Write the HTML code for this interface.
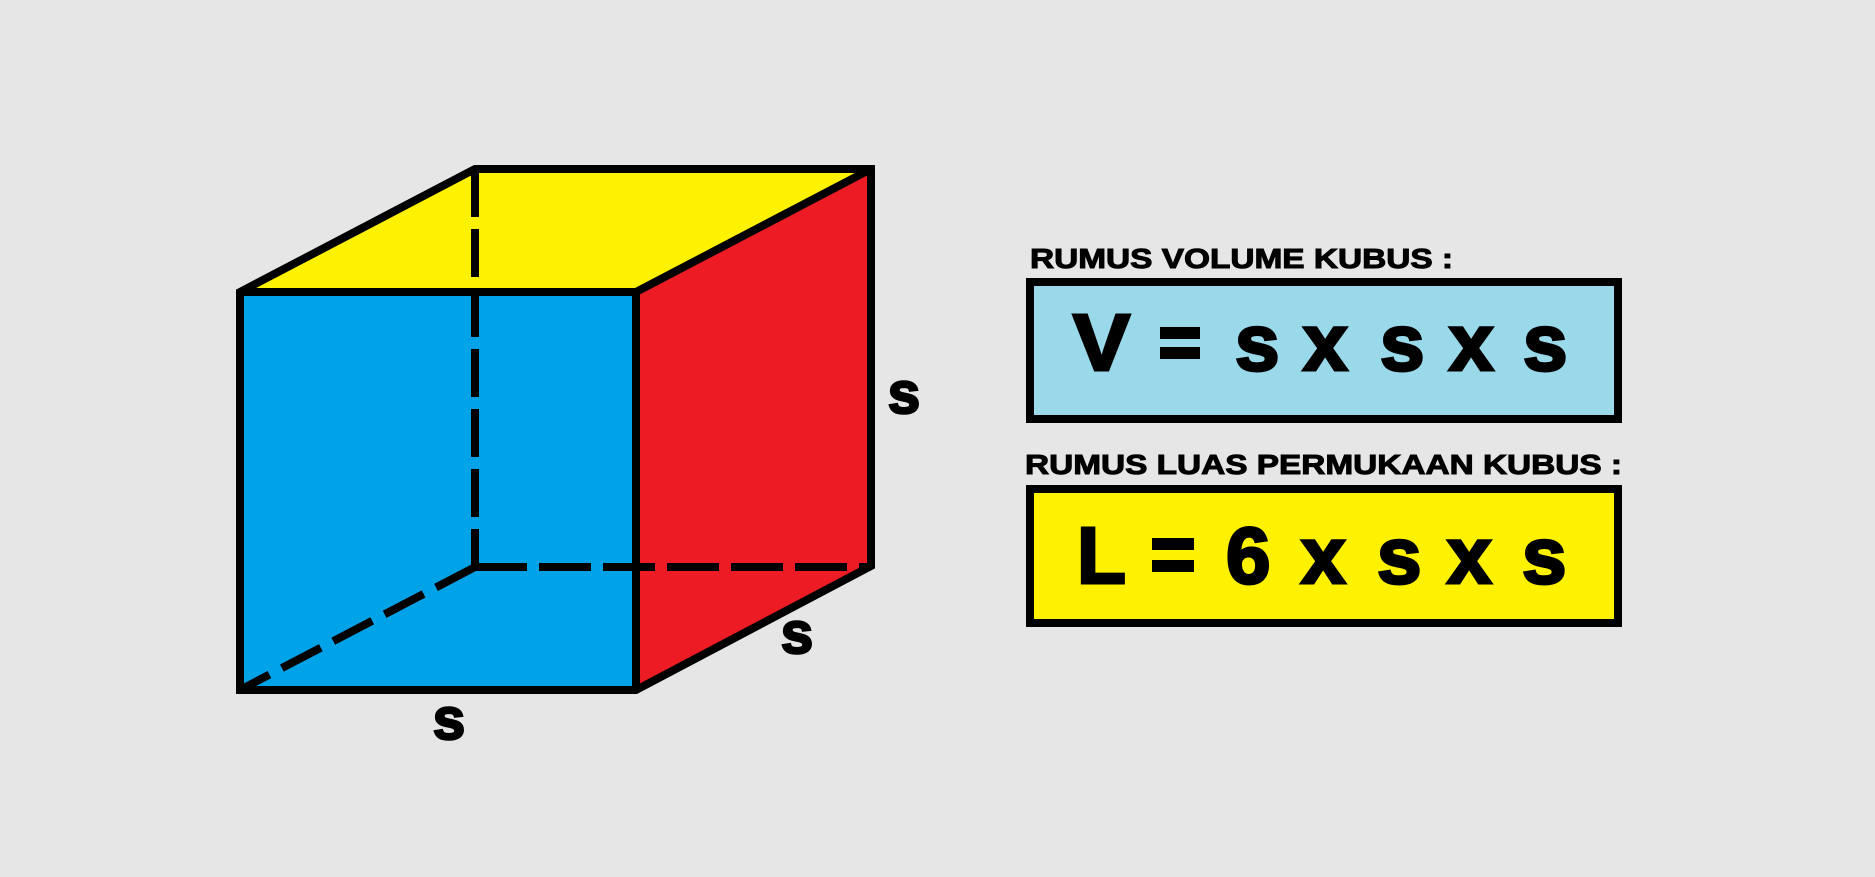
<!DOCTYPE html>
<html><head><meta charset="utf-8"><style>
html,body{margin:0;padding:0;background:#e6e6e6;}
svg{display:block;}
text{font-family:"Liberation Sans",Arial,sans-serif;font-weight:bold;fill:#000;}
</style></head><body>
<svg width="1875" height="877" viewBox="0 0 1875 877" xmlns="http://www.w3.org/2000/svg">
<rect width="1875" height="877" fill="#e6e6e6"/>
<polygon points="240,292 475,169 871,169 636,292" fill="#fff200"/>
<polygon points="636,292 871,169 871,566 636,690" fill="#ed1c24"/>
<rect x="240" y="292" width="396" height="398" fill="#00a2e8"/>
<g stroke="#000" stroke-width="8" fill="none">
<line x1="475" y1="169" x2="475" y2="567" stroke-dasharray="48 12"/>
<line x1="475" y1="567" x2="871" y2="567" stroke-dasharray="52 12"/>
<line x1="475" y1="567" x2="240" y2="690" stroke-dasharray="44 14"/>
</g>
<g stroke="#000" stroke-width="8" fill="none" stroke-linejoin="miter">
<polygon points="240,292 475,169 871,169 871,566 636,690 240,690"/>
<polyline points="240,292 636,292 871,169"/>
<line x1="636" y1="292" x2="636" y2="690"/>
</g>
<g font-size="58" stroke="#000" stroke-width="2.5" text-anchor="middle">
<text x="904" y="413">s</text>
<text x="797" y="653">s</text>
<text x="449" y="739">s</text>
</g>

<text x="1030" y="268" font-size="28" stroke="#000" stroke-width="1" textLength="423" lengthAdjust="spacingAndGlyphs">RUMUS VOLUME KUBUS :</text>
<rect x="1030" y="282" width="588" height="137" fill="#99d9ea" stroke="#000" stroke-width="8"/>
<g font-size="80" stroke="#000" stroke-width="3">
<text x="1073" y="370" textLength="57" lengthAdjust="spacingAndGlyphs">V</text>
<text x="1235" y="370">s</text>
<text x="1303" y="370">x</text>
<text x="1380" y="370">s</text>
<text x="1449" y="370">x</text>
<text x="1523" y="370">s</text>
</g>
<text x="1160" y="358" font-size="80" style="fill:none;stroke:none">=</text>
<rect x="1160" y="327" width="40" height="12" fill="#000"/>
<rect x="1160" y="347" width="40" height="12" fill="#000"/>

<text x="1025" y="474" font-size="28" stroke="#000" stroke-width="1" textLength="597" lengthAdjust="spacingAndGlyphs">RUMUS LUAS PERMUKAAN KUBUS :</text>
<rect x="1030" y="489" width="588" height="134" fill="#fff200" stroke="#000" stroke-width="8"/>
<g font-size="80" stroke="#000" stroke-width="3">
<text x="1077" y="583">L</text>
<text x="1226" y="583">6</text>
<text x="1301" y="583">x</text>
<text x="1377" y="583">s</text>
<text x="1447" y="583">x</text>
<text x="1522" y="583">s</text>
</g>
<text x="1152" y="572" font-size="80" style="fill:none;stroke:none">=</text>
<rect x="1152" y="538" width="42" height="12" fill="#000"/>
<rect x="1152" y="560" width="42" height="12" fill="#000"/>
</svg>
</body></html>
